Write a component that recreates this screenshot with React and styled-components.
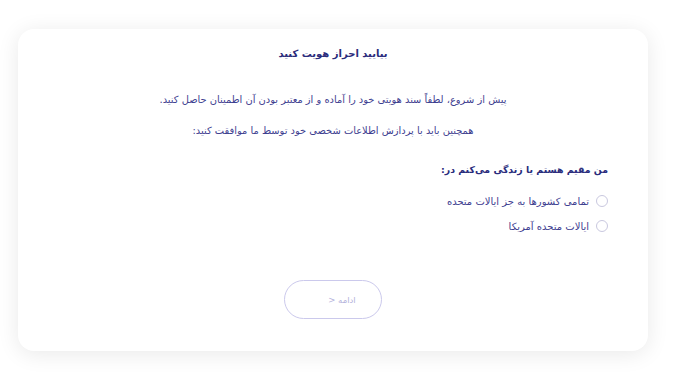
import React, { useState } from 'react';
import styled, { createGlobalStyle } from 'styled-components';

const GlobalStyle = createGlobalStyle`
  html, body {
    margin: 0;
    padding: 0;
    background: #ffffff;
  }
  body {
    font-family: "DejaVu Sans", "Noto Sans", sans-serif;
  }
`;

const Page = styled.div`
  width: 675px;
  height: 374px;
  box-sizing: border-box;
  padding: 29px 27px 23px 18px;
  background: #ffffff;
`;

const Card = styled.div`
  height: 100%;
  box-sizing: border-box;
  background: #ffffff;
  border-radius: 16px;
  box-shadow: 0 3px 22px rgba(0, 0, 0, 0.09);
  display: flex;
  flex-direction: column;
  align-items: center;
  padding: 19px 40px 0 40px;
  direction: rtl;
`;

const Title = styled.h2`
  margin: 0;
  font-size: 10px;
  font-weight: bold;
  color: #2a2c7c;
`;

const Text = styled.p`
  margin: ${p => p.$top}px 0 0 0;
  font-size: 9.9px;
  color: #3e4090;
  text-align: center;
`;

const Section = styled.div`
  align-self: stretch;
  margin-top: 28px;
`;

const Question = styled.h3`
  margin: 0;
  font-size: 9.4px;
  font-weight: bold;
  color: #2a2c7c;
`;

const Options = styled.div`
  margin-top: 20px;
  display: flex;
  flex-direction: column;
  gap: 13px;
`;

const Option = styled.label`
  display: flex;
  align-items: center;
  gap: 7px;
  font-size: 10px;
  color: #3e4090;
  cursor: pointer;
`;

const Radio = styled.span`
  width: 12px;
  height: 12px;
  box-sizing: border-box;
  border-radius: 50%;
  border: 1px solid ${p => (p.$on ? '#6b69c9' : '#c9c8df')};
  display: flex;
  align-items: center;
  justify-content: center;
  &::after {
    content: '';
    width: 6px;
    height: 6px;
    border-radius: 50%;
    background: ${p => (p.$on ? '#6b69c9' : 'transparent')};
  }
`;

const NextButton = styled.button`
  margin-top: 48px;
  width: 98px;
  height: 39px;
  padding: 0 0 0 18px;
  border-radius: 20px;
  border: 1px solid #cbc9ec;
  background: #ffffff;
  color: #b3b1db;
  font-family: "DejaVu Sans", sans-serif;
  font-size: 8.5px;
  direction: rtl;
`;

const options = ['تمامی کشورها به جز ایالات متحده', 'ایالات متحده آمریکا'];

export default function App() {
  const [picked, setPicked] = useState(null);
  return (
    <>
      <GlobalStyle />
      <Page>
        <Card>
          <Title>بیایید احراز هویت کنید</Title>
          <Text $top={35}>پیش از شروع، لطفاً سند هویتی خود را آماده و از معتبر بودن آن اطمینان حاصل کنید.</Text>
          <Text $top={20}>همچنین باید با پردازش اطلاعات شخصی خود توسط ما موافقت کنید:</Text>
          <Section>
            <Question>من مقیم هستم یا زندگی می‌کنم در:</Question>
            <Options>
              {options.map((o, i) => (
                <Option key={o} onClick={() => setPicked(i)}>
                  <Radio $on={picked === i} />
                  {o}
                </Option>
              ))}
            </Options>
          </Section>
          <NextButton disabled={picked === null}>ادامه &lt;</NextButton>
        </Card>
      </Page>
    </>
  );
}
